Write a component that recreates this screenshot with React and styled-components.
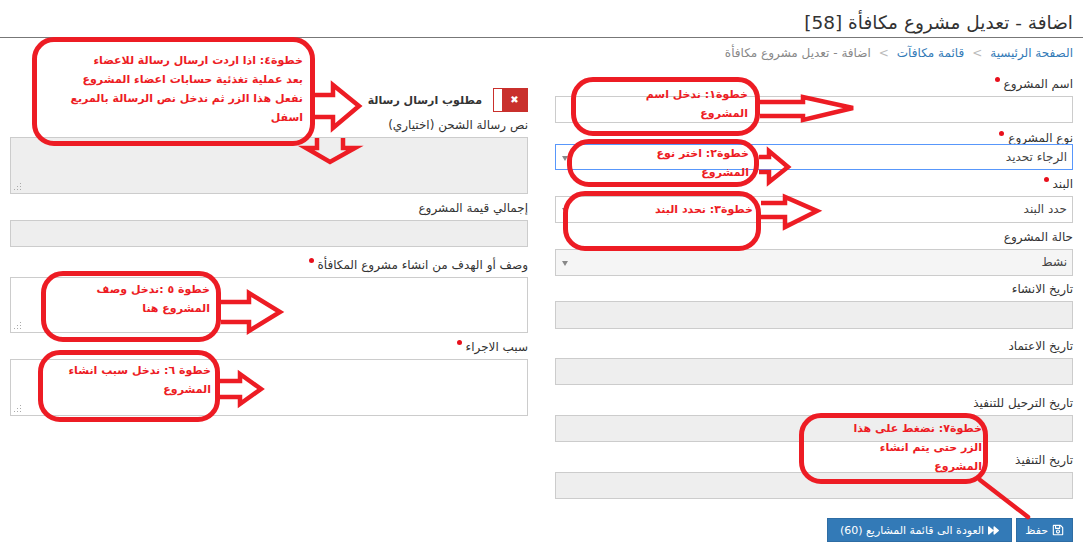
import React from 'react'
import styled, { createGlobalStyle } from 'styled-components'
import { FaForward, FaRegSave } from 'react-icons/fa'

const GlobalStyle = createGlobalStyle`
  html, body { margin: 0; padding: 0; background: #fff; }
  body { font-family: "DejaVu Sans", "Noto Sans", sans-serif; color: #333; }
`

const RED = '#ed1c24'

function App() {
  return (
    <Page dir="rtl">
      <GlobalStyle />
      <Title>اضافة - تعديل مشروع مكافأة [58]</Title>
      <Crumbs>
        <a>الصفحة الرئيسية</a>
        <Sep>&gt;</Sep>
        <a>قائمة مكافآت</a>
        <Sep>&gt;</Sep>
        <span>اضافة - تعديل مشروع مكافأة</span>
      </Crumbs>

      <Columns>
        <Column>
          <Field $top={9}>
            <Label>اسم المشروع <Req /></Label>
            <Control />
          </Field>
          <Field $top={7}>
            <Label $h={14}>نوع المشروع <Req /></Label>
            <Control $focus $h={26}>الرجاء تحديد<Caret /></Control>
          </Field>
          <Field $top={6}>
            <Label>البند <Req /></Label>
            <Control>حدد البند<Caret /></Control>
          </Field>
          <Field $top={6}>
            <Label>حالة المشروع</Label>
            <Control $soft>نشط<Caret /></Control>
          </Field>
          <Field $top={5}>
            <Label>تاريخ الانشاء</Label>
            <Control $off $h={28} />
          </Field>
          <Field $top={9}>
            <Label>تاريخ الاعتماد</Label>
            <Control $off $h={27} />
          </Field>
          <Field $top={10}>
            <Label>تاريخ الترحيل للتنفيذ</Label>
            <Control $off $h={27} />
          </Field>
          <Field $top={10}>
            <Label>تاريخ التنفيذ</Label>
            <Control $off $h={27} />
          </Field>
          <Buttons>
            <Button $pad={8}><FaRegSave size={12} /> حفظ</Button>
            <Button $pad={12}><FaForward size={11} /> العودة الى قائمة المشاريع (60)</Button>
          </Buttons>
        </Column>

        <Column>
          <ToggleRow>
            <Toggle><span /><b>✖</b></Toggle>
            <strong>مطلوب ارسال رسالة</strong>
          </ToggleRow>
          <Field $top={5}>
            <Label>نص رسالة الشحن (اختياري)</Label>
            <Control $off $h={57}><Grip /></Control>
          </Field>
          <Field $top={6}>
            <Label>إجمالي قيمة المشروع</Label>
            <Control $off />
          </Field>
          <Field $top={10}>
            <Label>وصف أو الهدف من انشاء مشروع المكافأة <Req /></Label>
            <Control $h={56}><Grip /></Control>
          </Field>
          <Field $top={6}>
            <Label>سبب الاجراء <Req /></Label>
            <Control $h={57}><Grip /></Control>
          </Field>
        </Column>
      </Columns>

      {/* the red hand drawn notes on top of the form */}
      <Markup viewBox="0 0 1083 551">
        <path d="M315 95H333V85L359 106L333 128V117H315" />
        <path d="M317 138V148H306L330 162L355 148H343V138" />
        <path d="M760 102H803V97L853 108L803 120V116H760" />
        <path d="M759 157H769V151L788 167L769 182V172H759" />
        <path d="M761 203H785V197L817 211L785 227V217H761" />
        <path d="M221 302H249V293L280 312L249 331V322H221" />
        <path d="M220 381H240V374L261 389L240 404V397H220" />
        <path d="M980 480L1028 517" strokeLinecap="round" />
      </Markup>

      <Note $x={32} $y={37} $w={283} $h={109} $pad={8.5} $inset={7}>
        <div>خطوة٤: اذا اردت ارسال رسالة للاعضاء</div>
        <div>بعد عملية تغذئية حسابات اعضاء المشروع</div>
        <div>نفعل هذا الزر ثم ندخل نص الرسالة بالمربع</div>
        <div>اسفل</div>
      </Note>
      <Note $x={571} $y={77} $w={189} $h={59} $pad={2.5} $inset={7}>
        <div>خطوة١: ندخل اسم</div>
        <div>المشروع</div>
      </Note>
      <Note $x={567} $y={139} $w={192} $h={48} $pad={0} $inset={5}>
        <div>خطوة٢: اختر نوع</div>
        <div>المشروع</div>
      </Note>
      <Note $x={563} $y={191} $w={198} $h={60} $pad={3.5} $inset={3}>
        <div>خطوة٣: نحدد البند</div>
      </Note>
      <Note $x={41} $y={271} $w={180} $h={71} $pad={3.5} $inset={6}>
        <div>خطوة ٥ :ندخل وصف</div>
        <div>المشروع هنا</div>
      </Note>
      <Note $x={38} $y={350} $w={182} $h={72} $pad={5.5} $inset={4}>
        <div>خطوة ٦: ندخل سبب انشاء</div>
        <div>المشروع</div>
      </Note>
      <Note $x={799} $y={413} $w={189} $h={71} $pad={0.5} $inset={1}>
        <div>خطوة٧: نضغط على هذا</div>
        <div>الزر حتى يتم انشاء</div>
        <div>المشروع</div>
      </Note>
    </Page>
  )
}

function Grip() {
  const dots = [[6, 0], [3, 3], [6, 3], [0, 6], [3, 6], [6, 6]]
  return (
    <GripMark viewBox="0 0 8 8">
      {dots.map(([x, y]) => <rect key={`${x}-${y}`} x={x} y={y} width="1" height="1" />)}
    </GripMark>
  )
}

export default App

const Page = styled.div`
  position: relative;
  width: 1083px;
  height: 551px;
  overflow: hidden;
  font-size: 12px;
`
const Title = styled.h1`
  margin: 0;
  height: 38px;
  box-sizing: border-box;
  padding: 11px 10px 0 0;
  border-bottom: 1px solid #777;
  font-size: 18.5px;
  line-height: 24px;
  font-weight: 400;
  color: #333;
`
const Crumbs = styled.div`
  display: flex;
  gap: 8px;
  padding: 7px 10px 0 0;
  height: 21px;
  box-sizing: border-box;
  line-height: 16px;
  color: #888;
  a { color: #337ab7; }
`
const Sep = styled.span`
  color: #bbb;
`
const Columns = styled.div`
  display: grid;
  grid-template-columns: 518px 518px;
  gap: 27px;
  padding: 0 10px;
  margin-top: 8px;
`
const Column = styled.div`
  display: flex;
  flex-direction: column;
`
const Field = styled.div`
  margin-top: ${(p) => p.$top}px;
`
const Label = styled.div`
  height: ${(p) => p.$h || 20}px;
  line-height: 16px;
  color: #333;
`
const Req = styled.i`
  display: inline-block;
  width: 5px;
  height: 5px;
  margin: 0;
  border-radius: 50%;
  background: #e8101c;
  vertical-align: 6px;
`
const Control = styled.div`
  position: relative;
  box-sizing: border-box;
  height: ${(p) => p.$h || 27}px;
  padding-right: 5px;
  line-height: 25px;
  color: #444;
  border: 1px solid ${(p) => (p.$focus ? '#5897fb' : '#ccc')};
  background: ${(p) => (p.$off ? '#eee' : p.$soft ? '#f5f5f5' : '#fff')};
`
const Caret = styled.span`
  position: absolute;
  left: 6px;
  top: 11px;
  border-style: solid;
  border-width: 5px 3px 0;
  border-color: #888 transparent transparent;
`
const GripMark = styled.svg`
  position: absolute;
  left: 3px;
  bottom: 2px;
  width: 8px;
  height: 8px;
  fill: #aaa;
`
const Buttons = styled.div`
  display: flex;
  gap: 4px;
  margin-top: 19px;
`
const Button = styled.button`
  display: flex;
  align-items: center;
  gap: 4px;
  height: 24px;
  padding: 0 ${(p) => p.$pad}px;
  border: 1px solid #2e6da4;
  background: #337ab7;
  color: #fff;
  font: 11px "DejaVu Sans", sans-serif;
`
const ToggleRow = styled.div`
  display: flex;
  align-items: center;
  gap: 11px;
  height: 24px;
  margin-top: 21px;
  strong { font-size: 11px; color: #333; }
`
const Toggle = styled.div`
  display: flex;
  width: 35px;
  height: 24px;
  box-sizing: border-box;
  border: 1px solid #c9302c;
  flex-direction: row-reverse;
  span { width: 8px; background: #fff; }
  b {
    flex: 1;
    background: #c9302c;
    color: #fff;
    font-size: 10px;
    line-height: 22px;
    text-align: center;
  }
`
const Markup = styled.svg`
  position: absolute;
  inset: 0;
  width: 1083px;
  height: 551px;
  pointer-events: none;
  fill: none;
  stroke: ${RED};
  stroke-width: 4.5;
  stroke-linejoin: miter;
`
const Note = styled.div`
  position: absolute;
  left: ${(p) => p.$x}px;
  top: ${(p) => p.$y}px;
  width: ${(p) => p.$w}px;
  height: ${(p) => p.$h}px;
  box-sizing: border-box;
  padding: ${(p) => p.$pad}px ${(p) => p.$inset}px 0 0;
  border: 5px solid ${RED};
  border-radius: 22px;
  color: ${RED};
  font-size: 11px;
  font-weight: 700;
  line-height: 19px;
`
